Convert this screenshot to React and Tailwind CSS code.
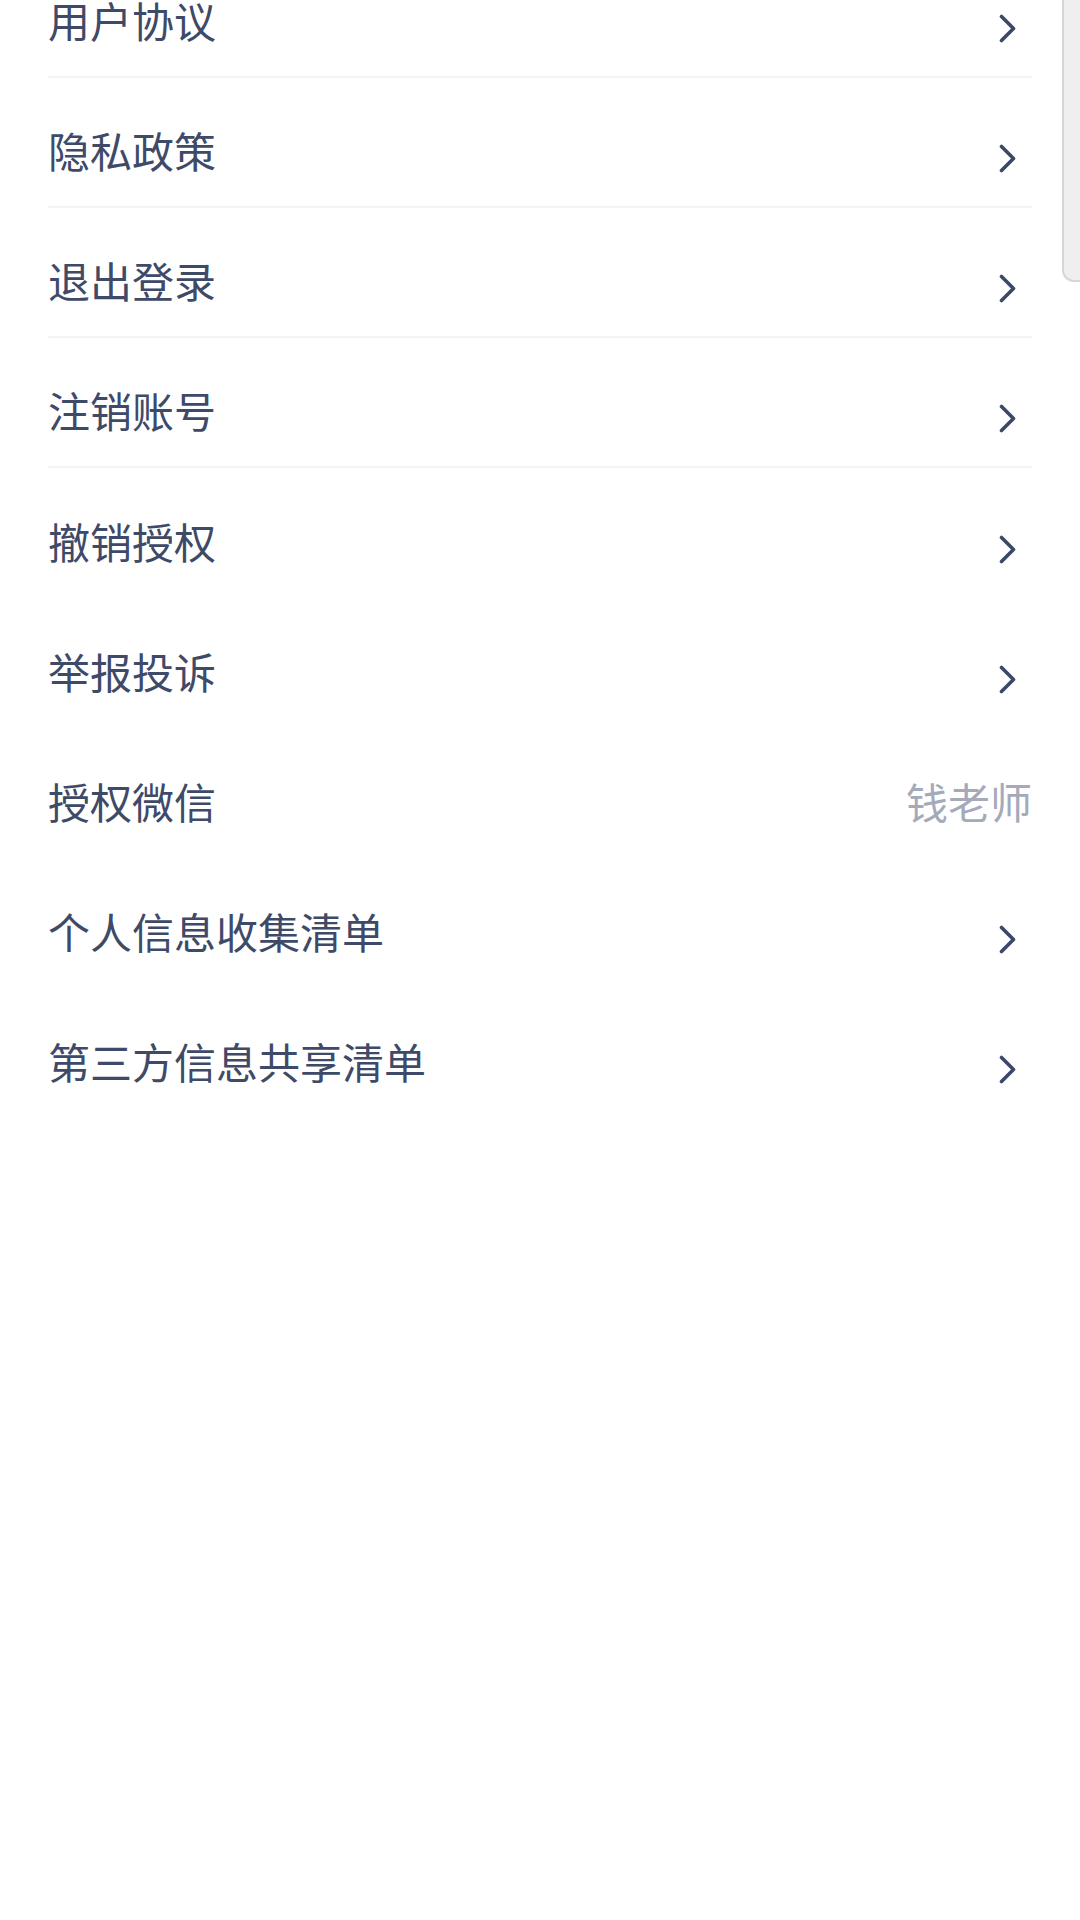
import React from 'react';

const items = [
    { label: '用户协议', divider: true },
    { label: '隐私政策', divider: true },
    { label: '退出登录', divider: true },
    { label: '注销账号', divider: true },
    { label: '撤销授权' },
    { label: '举报投诉' },
    { label: '授权微信', value: '钱老师' },
    { label: '个人信息收集清单' },
    { label: '第三方信息共享清单' },
];

const Chevron = () => (
    <svg width="17" height="29" viewBox="0 0 17 29" fill="none" className="mt-[16px] mr-[16px]">
        <path d="M2.5 2.5 L14.5 14.5 L2.5 26.5" stroke="#3b4868" strokeWidth="3.6" strokeLinecap="round" strokeLinejoin="round" />
    </svg>
);

const Row = ({ label, value, divider }) => (
    <div className={`flex items-center justify-between h-[130px] pt-[16px] ${divider ? 'border-b-2 border-[#f3f4f6]' : ''}`}>
        <span className="text-[42px] leading-none text-[#3e4a68]">{label}</span>
        {value ? (
            <span className="text-[42px] leading-none text-[#a4aaba]">{value}</span>
        ) : (
            <Chevron />
        )}
    </div>
);

export default function App() {
    return (
        <div className="relative w-[1080px] h-[1920px] overflow-hidden bg-white" style={{ fontFamily: '"Noto Sans CJK SC", "Noto Sans", sans-serif' }}>
            {/* list is scrolled up a little, first row is cut at the top */}
            <div className="-mt-[52px] px-[48px]">
                {items.map((item) => (
                    <Row key={item.label} {...item} />
                ))}
            </div>
            {/* scrollbar */}
            <div className="absolute top-0 right-0 w-[18px] h-[282px] bg-[#efefef] border-l-2 border-b-2 border-[#d6d6d6] rounded-bl-[12px]" />
        </div>
    );
}
